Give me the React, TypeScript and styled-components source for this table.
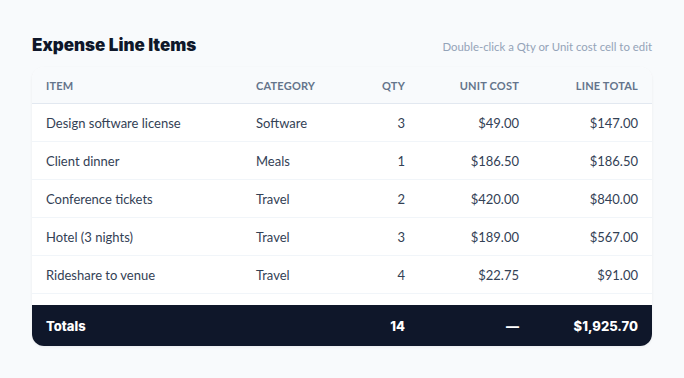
import React from 'react';
import styled, { createGlobalStyle } from 'styled-components';

const GlobalStyle = createGlobalStyle`
  body {
    margin: 0;
    background: #f8fafc;
    font-family: Lato, "Noto Sans", sans-serif;
    color: #334155;
  }
`;

type Line = {
  item: string;
  category: string;
  qty: number;
  unit: number;
};

const lines: Line[] = [
  { item: 'Design software license', category: 'Software', qty: 3, unit: 49 },
  { item: 'Client dinner', category: 'Meals', qty: 1, unit: 186.5 },
  { item: 'Conference tickets', category: 'Travel', qty: 2, unit: 420 },
  { item: 'Hotel (3 nights)', category: 'Travel', qty: 3, unit: 189 },
  { item: 'Rideshare to venue', category: 'Travel', qty: 4, unit: 22.75 },
];

const money = (n: number) =>
  '$' + n.toLocaleString('en-US', { minimumFractionDigits: 2, maximumFractionDigits: 2 });

// heavy display face for title and totals
const heavy = `Inter, "Noto Sans", sans-serif`;

const Page = styled.div`
  padding: 33px 32px 32px;
`;

const TitleBar = styled.div`
  display: flex;
  align-items: baseline;
  justify-content: space-between;
  height: 34px;
  padding-top: 2px;
  box-sizing: border-box;
`;

const Title = styled.h2`
  margin: 0;
  font-family: ${heavy};
  font-size: 17px;
  font-weight: 900;
  color: #0f172a;
`;

const Hint = styled.span`
  font-size: 11.4px;
  color: #94a3b8;
`;

const Card = styled.div`
  background: #ffffff;
  border-radius: 12px;
  overflow: hidden;
  box-shadow: 0 1px 3px rgba(15, 23, 42, 0.06);
`;

const Grid = styled.div<{ $head?: boolean; $foot?: boolean }>`
  display: grid;
  grid-template-columns: 210px 107px 70px 114px 1fr;
  align-items: center;
  height: ${(p) => (p.$head ? '37px' : p.$foot ? '41px' : '38px')};
  background: ${(p) => (p.$head ? '#f8fafc' : p.$foot ? '#0f172a' : '#ffffff')};
  border-bottom: ${(p) =>
    p.$head ? '1px solid #e2e8f0' : p.$foot ? 'none' : '1px solid #f1f5f9'};
  box-sizing: border-box;
`;

const Cell = styled.div<{ $num?: boolean }>`
  padding: 0 14px;
  text-align: ${(p) => (p.$num ? 'right' : 'left')};
  font-size: 13px;
  color: #334155;
  white-space: nowrap;
`;

const HeadCell = styled(Cell)`
  font-size: 11px;
  font-weight: 700;
  letter-spacing: 0.2px;
  text-transform: uppercase;
  color: #64748b;
`;

const FootCell = styled(Cell)`
  font-family: ${heavy};
  font-weight: 800;
  color: #ffffff;
`;

const Spacer = styled.div`
  height: 11px;
  background: #ffffff;
`;

export default function App() {
  return (
    <Page>
      <GlobalStyle />
      <TitleBar>
        <Title>Expense Line Items</Title>
        <Hint>Double-click a Qty or Unit cost cell to edit</Hint>
      </TitleBar>
      <Card>
        <Grid $head>
          <HeadCell>Item</HeadCell>
          <HeadCell>Category</HeadCell>
          <HeadCell $num>Qty</HeadCell>
          <HeadCell $num>Unit cost</HeadCell>
          <HeadCell $num>Line total</HeadCell>
        </Grid>
        {lines.map((l) => (
          <Grid key={l.item}>
            <Cell>{l.item}</Cell>
            <Cell>{l.category}</Cell>
            <Cell $num>{l.qty}</Cell>
            <Cell $num>{money(l.unit)}</Cell>
            <Cell $num>{money(l.qty * l.unit)}</Cell>
          </Grid>
        ))}
        <Spacer />
        <Grid $foot>
          <FootCell>Totals</FootCell>
          <FootCell />
          <FootCell $num>14</FootCell>
          <FootCell $num>—</FootCell>
          <FootCell $num>$1,925.70</FootCell>
        </Grid>
      </Card>
    </Page>
  );
}
